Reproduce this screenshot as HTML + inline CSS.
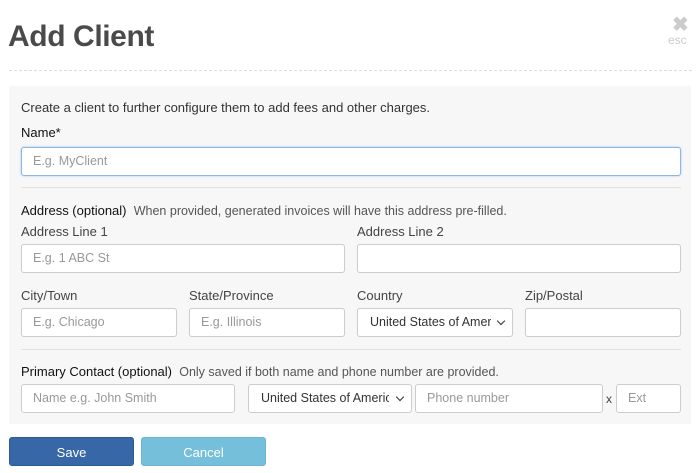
<!DOCTYPE html>
<html><head><style>
*{box-sizing:border-box;margin:0;padding:0}
body{width:700px;height:473px;background:#fff;font-family:"Liberation Sans",sans-serif;color:#333;position:relative;overflow:hidden;font-size:13px}
.a{position:absolute}
.in{position:absolute;background:#fff;border:1px solid #ccc;border-radius:3px;height:29px;padding-left:11px;line-height:27px;color:#999;font-size:12.5px}
.sel{color:#333;padding-left:12px;overflow:hidden;white-space:nowrap}
.sel span{display:block;overflow:hidden;white-space:nowrap}
.sel::after{content:"";position:absolute;right:8px;top:9px;width:5px;height:5px;border-right:1.5px solid #333;border-bottom:1.5px solid #333;transform:rotate(45deg)}
.lbl{position:absolute;font-size:13px;color:#444}
.hr{position:absolute;left:21px;width:660px;height:1px;background:#e2e2e2}
.btn{position:absolute;top:437px;height:29px;width:125px;border-radius:3px;color:#fff;text-align:center;line-height:29px;font-size:13px}
</style></head><body>
<div class="a" style="left:8px;top:20px;font-size:30px;color:#4a4a4a;font-weight:bold;letter-spacing:-0.4px">Add Client</div>
<div class="a" style="left:672px;top:12px;font-size:20px;color:#ccc;font-weight:bold">✖</div>
<div class="a" style="left:668px;top:33px;font-size:12px;color:#ccc">esc</div>
<div class="a" style="left:9px;top:70px;width:683px;border-top:1px dashed #ddd"></div>
<div class="a" style="left:9px;top:86px;width:682px;height:338px;background:#f7f7f7"></div>
<div class="lbl" style="left:21px;top:100px;color:#333">Create a client to further configure them to add fees and other charges.</div>
<div class="lbl" style="left:21px;top:125px;color:#111">Name*</div>
<div class="in" style="left:21px;top:147px;width:660px;border-color:#8db6e8;box-shadow:0 0 2px #a9c8f0">E.g. MyClient</div>
<div class="hr" style="top:187px"></div>
<div class="lbl" style="left:21px;top:203px;color:#111">Address (optional)&nbsp; <span style="color:#555;font-size:12.5px">When provided, generated invoices will have this address pre-filled.</span></div>
<div class="lbl" style="left:21px;top:224px">Address Line 1</div>
<div class="lbl" style="left:357px;top:224px">Address Line 2</div>
<div class="in" style="left:21px;top:244px;width:324px">E.g. 1 ABC St</div>
<div class="in" style="left:357px;top:244px;width:324px"></div>
<div class="lbl" style="left:21px;top:288px">City/Town</div>
<div class="lbl" style="left:189px;top:288px">State/Province</div>
<div class="lbl" style="left:357px;top:288px">Country</div>
<div class="lbl" style="left:525px;top:288px">Zip/Postal</div>
<div class="in" style="left:21px;top:308px;width:156px">E.g. Chicago</div>
<div class="in" style="left:189px;top:308px;width:156px">E.g. Illinois</div>
<div class="in sel" style="left:357px;top:308px;width:156px"><span style="width:121px">United States of America</span></div>
<div class="in" style="left:525px;top:308px;width:156px"></div>
<div class="hr" style="top:349px"></div>
<div class="lbl" style="left:21px;top:364px;color:#111">Primary Contact (optional)&nbsp; <span style="color:#555;font-size:12.5px">Only saved if both name and phone number are provided.</span></div>
<div class="in" style="left:21px;top:384px;width:214px">Name e.g. John Smith</div>
<div class="in sel" style="left:248px;top:384px;width:164px"><span style="width:128px">United States of America</span></div>
<div class="in" style="left:415px;top:384px;width:188px">Phone number</div>
<div class="lbl" style="left:606px;top:392px;font-size:12px">x</div>
<div class="in" style="left:616px;top:384px;width:65px">Ext</div>
<div class="btn" style="left:9px;background:#3767a6;border:1px solid #2d5a94">Save</div>
<div class="btn" style="left:141px;background:#75bfdb;border:1px solid #6ab6d3">Cancel</div>
</body></html>
